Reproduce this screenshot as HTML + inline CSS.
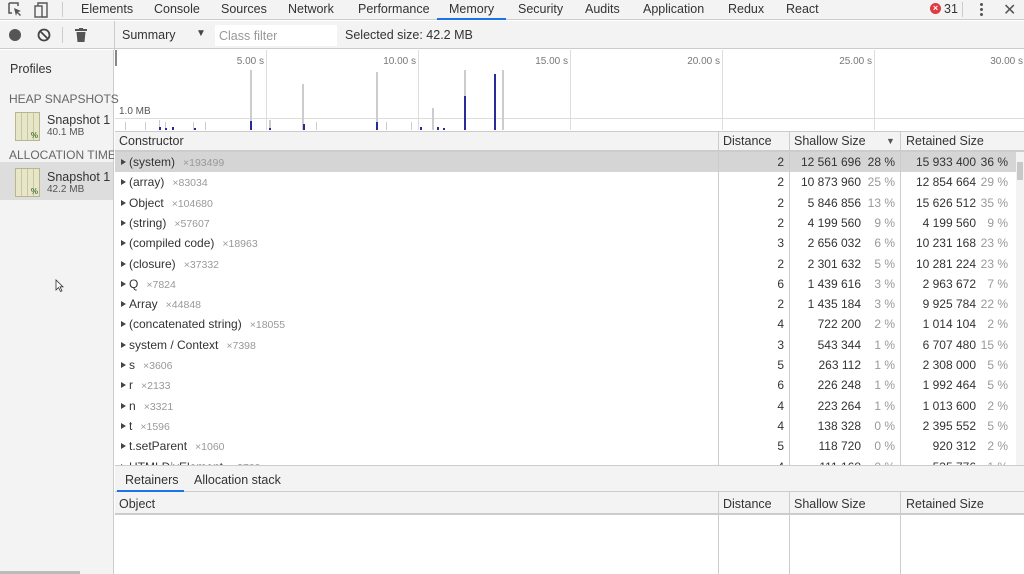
<!DOCTYPE html>
<html><head><meta charset="utf-8"><style>
*{margin:0;padding:0;box-sizing:border-box}
body{width:1024px;height:574px;overflow:hidden;background:#fff;font-family:"Liberation Sans",sans-serif;color:#333;position:relative;font-size:12px}
.a{position:absolute}
.tab{position:absolute;top:2px;font-size:12.5px;color:#333}
.row{position:absolute;left:115px;width:901px;height:20px;font-size:12px;line-height:20px}
.row span{position:absolute}
.c{left:14px;white-space:nowrap}
.c i{font-style:normal;color:#999;font-size:10.5px;margin-left:8px}
.tri{position:absolute;left:6px;top:7px;width:0;height:0;border-left:5px solid #444;border-top:3.5px solid transparent;border-bottom:3.5px solid transparent}
.d{right:232px;text-align:right}
.s{right:155px;text-align:right}
.sp{right:121px;text-align:right;color:#999}
.r{right:40px;text-align:right}
.rp{right:8px;text-align:right;color:#999}
.vl{position:absolute;width:1px;background:#ccc}
.ico{position:absolute;width:25px;height:29px;background:repeating-linear-gradient(90deg,#e8e6c8 0 5px,#c9c6a0 5px 6px),#e8e6c8;border:1px solid #b9b58f}
.ico:after{content:"%";position:absolute;right:1px;bottom:0;font-size:8px;color:#4a7a3a;font-weight:bold}
</style></head><body>
<div class="a" style="left:0;top:0;width:1024px;height:20px;background:#f3f3f3;border-bottom:1px solid #ccc"></div>
<svg class="a" style="left:8px;top:2px" width="44" height="16"><path d="M1 1h9v3M1 1v10h3" fill="none" stroke="#555" stroke-width="1.5"/><path d="M6 6l7 3-3 1 3 3-1 1-3-3-1 3z" fill="#555"/><rect x="27" y="4" width="7" height="11" fill="none" stroke="#555" stroke-width="1.4"/><path d="M30 4V1h9v14h-5" fill="none" stroke="#555" stroke-width="1.4"/></svg>
<div class="a" style="left:62px;top:2px;width:1px;height:15px;background:#ccc"></div>
<div class="tab" style="left:81px">Elements</div>
<div class="tab" style="left:154px">Console</div>
<div class="tab" style="left:221px">Sources</div>
<div class="tab" style="left:288px">Network</div>
<div class="tab" style="left:358px">Performance</div>
<div class="tab" style="left:449px">Memory</div>
<div class="a" style="left:437px;top:18px;width:69px;height:2px;background:#1a73e8"></div>
<div class="tab" style="left:518px">Security</div>
<div class="tab" style="left:585px">Audits</div>
<div class="tab" style="left:643px">Application</div>
<div class="tab" style="left:728px">Redux</div>
<div class="tab" style="left:786px">React</div>
<div class="a" style="left:930px;top:3px;width:11px;height:11px;border-radius:50%;background:#e0393e;color:#fff;font-size:9px;line-height:11px;text-align:center;font-weight:bold">×</div>
<div class="tab" style="left:944px">31</div>
<div class="a" style="left:962px;top:2px;width:1px;height:15px;background:#ccc"></div>
<div class="a" style="left:980px;top:3px;width:3px;height:3px;background:#555;border-radius:50%;box-shadow:0 5px 0 #555,0 10px 0 #555"></div>
<div class="tab" style="left:1003px;top:0;font-size:16px;color:#555">✕</div>
<div class="a" style="left:0;top:21px;width:1024px;height:28px;background:#f3f3f3;border-bottom:1px solid #ccc"></div>
<div class="a" style="left:9px;top:29px;width:12px;height:12px;border-radius:50%;background:#555"></div>
<svg class="a" style="left:37px;top:28px" width="14" height="14"><circle cx="7" cy="7" r="5.5" fill="none" stroke="#444" stroke-width="1.8"/><path d="M3 3l8 8" stroke="#444" stroke-width="1.8"/></svg>
<div class="a" style="left:62px;top:27px;width:1px;height:16px;background:#ccc"></div>
<svg class="a" style="left:75px;top:28px" width="12" height="14"><rect x="0" y="1" width="12" height="2" fill="#555"/><rect x="4" y="0" width="4" height="2" fill="#555"/><path d="M1.5 4h9l-1 10h-7z" fill="#555"/></svg>
<div class="a" style="left:114px;top:21px;width:1px;height:29px;background:#ccc"></div>
<div class="a" style="left:122px;top:28px;font-size:12.5px">Summary</div>
<div class="a" style="left:196px;top:28px;font-size:10px;color:#444">▼</div>
<div class="a" style="left:215px;top:25px;width:122px;height:21px;background:#fff"></div>
<div class="a" style="left:219px;top:29px;font-size:12.5px;color:#999">Class filter</div>
<div class="a" style="left:345px;top:28px;font-size:12.5px">Selected size: 42.2 MB</div>
<div class="a" style="left:0;top:50px;width:114px;height:524px;background:#f3f3f3;border-right:1px solid #ccc"></div>
<div class="a" style="left:10px;top:62px;font-size:12.5px">Profiles</div>
<div class="a" style="left:9px;top:92px;font-size:12px;color:#666">HEAP SNAPSHOTS</div>
<div class="a" style="left:0;top:148px;width:114px;height:14px;overflow:hidden"><div class="a" style="left:9px;top:0;font-size:12px;color:#666;white-space:nowrap">ALLOCATION TIMELINES</div></div>
<div class="a" style="left:0;top:162px;width:113px;height:38px;background:#ddd"></div>
<div class="ico" style="left:15px;top:112px"></div>
<div class="ico" style="left:15px;top:168px"></div>
<div class="a" style="left:47px;top:113px;font-size:12.5px">Snapshot 1</div>
<div class="a" style="left:47px;top:127px;font-size:10px;color:#555">40.1 MB</div>
<div class="a" style="left:47px;top:170px;font-size:12.5px">Snapshot 1</div>
<div class="a" style="left:47px;top:184px;font-size:10px;color:#555">42.2 MB</div>
<div class="a" style="left:0;top:571px;width:80px;height:3px;background:#bbb"></div>
<div class="a" style="left:115px;top:50px;width:2px;height:16px;background:#888"></div>
<svg class="a" style="left:115px;top:50px" width="909" height="81">
<g stroke="#ddd"><path d="M151.5 0v80M303.5 0v80M455.5 0v80M607.5 0v80M759.5 0v80"/><path d="M0 68.5h909"/></g>
<g fill="#777" font-size="10" font-family="Liberation Sans" text-anchor="end"><text x="149" y="14">5.00 s</text><text x="301" y="14">10.00 s</text><text x="453" y="14">15.00 s</text><text x="605" y="14">20.00 s</text><text x="757" y="14">25.00 s</text><text x="908" y="14">30.00 s</text><text x="4" y="64" text-anchor="start" fill="#555">1.0 MB</text></g>
<g fill="#ccc"><rect x="135" y="20" width="2" height="60"/><rect x="187" y="34" width="2" height="46"/><rect x="261" y="22" width="2" height="58"/><rect x="317" y="58" width="2" height="22"/><rect x="349" y="20" width="2" height="60"/><rect x="387" y="20" width="2" height="60"/><rect x="10" y="72" width="1" height="8"/><rect x="30" y="72" width="1" height="8"/><rect x="44" y="70" width="1" height="10"/><rect x="50" y="72" width="1" height="8"/><rect x="78" y="72" width="1" height="8"/><rect x="90" y="72" width="1" height="8"/><rect x="154" y="70" width="2" height="10"/><rect x="201" y="72" width="1" height="8"/><rect x="271" y="72" width="1" height="8"/><rect x="296" y="72" width="1" height="8"/></g>
<g fill="#2a2a9a"><rect x="135" y="71" width="2" height="9"/><rect x="188" y="74" width="2" height="6"/><rect x="261" y="72" width="2" height="8"/><rect x="349" y="46" width="2" height="34"/><rect x="379" y="24" width="2" height="56"/><rect x="44" y="77" width="2" height="3"/><rect x="50" y="78" width="2" height="2"/><rect x="57" y="77" width="2" height="3"/><rect x="79" y="78" width="2" height="2"/><rect x="154" y="78" width="2" height="2"/><rect x="305" y="77" width="2" height="3"/><rect x="322" y="77" width="2" height="3"/><rect x="328" y="78" width="2" height="2"/></g>
</svg>
<div class="a" style="left:115px;top:131px;width:909px;height:21px;background:#f3f3f3;border-top:1px solid #ccc;border-bottom:2px solid #ccc"></div>
<div class="a" style="left:119px;top:134px;font-size:12.5px">Constructor</div>
<div class="a" style="left:723px;top:134px;font-size:12.5px">Distance</div>
<div class="a" style="left:794px;top:134px;font-size:12.5px">Shallow Size</div>
<div class="a" style="left:886px;top:136px;font-size:9px;color:#555">▼</div>
<div class="a" style="left:906px;top:134px;font-size:12.5px">Retained Size</div>
<div class="a" style="left:115px;top:152px;width:901px;height:20px;background:#d5d5d5"></div>
<div class="vl" style="left:718px;top:131px;height:334px"></div>
<div class="vl" style="left:789px;top:131px;height:334px"></div>
<div class="vl" style="left:900px;top:131px;height:334px"></div>
<div class="a" style="left:1016px;top:152px;width:8px;height:313px;background:#f3f3f3"></div>
<div class="a" style="left:1017px;top:162px;width:6px;height:18px;background:#c8c8c8"></div>
<div class="a" style="left:115px;top:152px;width:901px;height:313px;overflow:hidden">
<div style="position:relative;top:-152px;left:-115px">
<div class="row" style="top:152px"><b class="tri"></b><span class="c">(system)<i>×193499</i></span><span class="d">2</span><span class="s">12 561 696</span><span class="sp" style="color:#333">28 %</span><span class="r">15 933 400</span><span class="rp" style="color:#333">36 %</span></div>
<div class="row" style="top:172.3px"><b class="tri"></b><span class="c">(array)<i>×83034</i></span><span class="d">2</span><span class="s">10 873 960</span><span class="sp">25 %</span><span class="r">12 854 664</span><span class="rp">29 %</span></div>
<div class="row" style="top:192.6px"><b class="tri"></b><span class="c">Object<i>×104680</i></span><span class="d">2</span><span class="s">5 846 856</span><span class="sp">13 %</span><span class="r">15 626 512</span><span class="rp">35 %</span></div>
<div class="row" style="top:212.9px"><b class="tri"></b><span class="c">(string)<i>×57607</i></span><span class="d">2</span><span class="s">4 199 560</span><span class="sp">9 %</span><span class="r">4 199 560</span><span class="rp">9 %</span></div>
<div class="row" style="top:233.2px"><b class="tri"></b><span class="c">(compiled code)<i>×18963</i></span><span class="d">3</span><span class="s">2 656 032</span><span class="sp">6 %</span><span class="r">10 231 168</span><span class="rp">23 %</span></div>
<div class="row" style="top:253.5px"><b class="tri"></b><span class="c">(closure)<i>×37332</i></span><span class="d">2</span><span class="s">2 301 632</span><span class="sp">5 %</span><span class="r">10 281 224</span><span class="rp">23 %</span></div>
<div class="row" style="top:273.8px"><b class="tri"></b><span class="c">Q<i>×7824</i></span><span class="d">6</span><span class="s">1 439 616</span><span class="sp">3 %</span><span class="r">2 963 672</span><span class="rp">7 %</span></div>
<div class="row" style="top:294.1px"><b class="tri"></b><span class="c">Array<i>×44848</i></span><span class="d">2</span><span class="s">1 435 184</span><span class="sp">3 %</span><span class="r">9 925 784</span><span class="rp">22 %</span></div>
<div class="row" style="top:314.4px"><b class="tri"></b><span class="c">(concatenated string)<i>×18055</i></span><span class="d">4</span><span class="s">722 200</span><span class="sp">2 %</span><span class="r">1 014 104</span><span class="rp">2 %</span></div>
<div class="row" style="top:334.7px"><b class="tri"></b><span class="c">system / Context<i>×7398</i></span><span class="d">3</span><span class="s">543 344</span><span class="sp">1 %</span><span class="r">6 707 480</span><span class="rp">15 %</span></div>
<div class="row" style="top:355px"><b class="tri"></b><span class="c">s<i>×3606</i></span><span class="d">5</span><span class="s">263 112</span><span class="sp">1 %</span><span class="r">2 308 000</span><span class="rp">5 %</span></div>
<div class="row" style="top:375.3px"><b class="tri"></b><span class="c">r<i>×2133</i></span><span class="d">6</span><span class="s">226 248</span><span class="sp">1 %</span><span class="r">1 992 464</span><span class="rp">5 %</span></div>
<div class="row" style="top:395.6px"><b class="tri"></b><span class="c">n<i>×3321</i></span><span class="d">4</span><span class="s">223 264</span><span class="sp">1 %</span><span class="r">1 013 600</span><span class="rp">2 %</span></div>
<div class="row" style="top:415.9px"><b class="tri"></b><span class="c">t<i>×1596</i></span><span class="d">4</span><span class="s">138 328</span><span class="sp">0 %</span><span class="r">2 395 552</span><span class="rp">5 %</span></div>
<div class="row" style="top:436.2px"><b class="tri"></b><span class="c">t.setParent<i>×1060</i></span><span class="d">5</span><span class="s">118 720</span><span class="sp">0 %</span><span class="r">920 312</span><span class="rp">2 %</span></div>
<div class="row" style="top:456.5px"><b class="tri"></b><span class="c">HTMLDivElement<i>×2700</i></span><span class="d">4</span><span class="s">111 168</span><span class="sp">0 %</span><span class="r">535 776</span><span class="rp">1 %</span></div>
</div></div>
<div class="a" style="left:115px;top:465px;width:909px;height:27px;background:#f3f3f3;border-top:1px solid #ccc;border-bottom:1px solid #ccc"></div>
<div class="a" style="left:125px;top:473px;font-size:12.5px">Retainers</div>
<div class="a" style="left:117px;top:490px;width:67px;height:2px;background:#1a73e8"></div>
<div class="a" style="left:194px;top:473px;font-size:12.5px">Allocation stack</div>
<div class="a" style="left:115px;top:492px;width:909px;height:23px;background:#f3f3f3;border-bottom:2px solid #ccc"></div>
<div class="a" style="left:119px;top:497px;font-size:12.5px">Object</div>
<div class="a" style="left:723px;top:497px;font-size:12.5px">Distance</div>
<div class="a" style="left:794px;top:497px;font-size:12.5px">Shallow Size</div>
<div class="a" style="left:906px;top:497px;font-size:12.5px">Retained Size</div>
<div class="vl" style="left:718px;top:492px;height:82px"></div>
<div class="vl" style="left:789px;top:492px;height:82px"></div>
<div class="vl" style="left:900px;top:492px;height:82px"></div>
<svg class="a" style="left:55px;top:279px" width="10" height="14"><path d="M1 1v10l2.5-2.5 2 4 1.5-.7-2-4H8z" fill="#fff" stroke="#333" stroke-width=".8"/></svg>
</body></html>
